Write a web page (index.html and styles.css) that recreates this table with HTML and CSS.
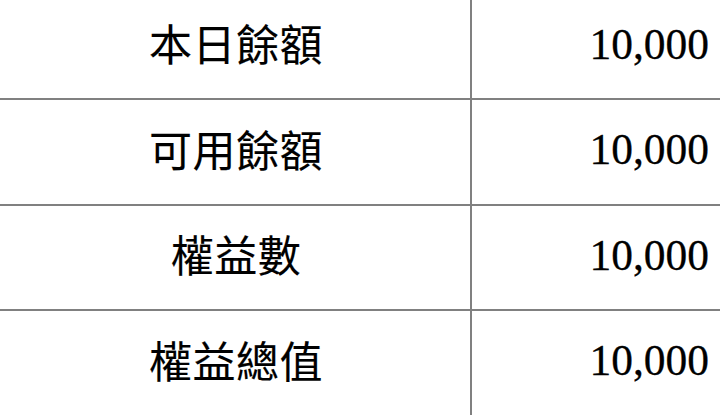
FILE: index.html
```html
<!DOCTYPE html>
<html lang="zh-Hant">
<head>
<meta charset="utf-8">
<link rel="stylesheet" href="styles.css">
</head>
<body>
<div class="sheet">
  <div class="row">
    <div class="label">本日餘額</div>
    <div class="value">10,000</div>
  </div>
  <div class="row">
    <div class="label">可用餘額</div>
    <div class="value">10,000</div>
  </div>
  <div class="row">
    <div class="label">權益數</div>
    <div class="value">10,000</div>
  </div>
  <div class="row">
    <div class="label">權益總值</div>
    <div class="value">10,000</div>
  </div>
</div>
</body>
</html>
```
FILE: styles.css
```css
html, body {
  margin: 0;
  padding: 0;
  background: #ffffff;
  overflow: hidden;
}
.sheet {
  margin-top: -5.5px;
  display: flex;
  flex-direction: column;
}
.row {
  display: grid;
  grid-template-columns: 472px 1fr;
  height: 105.5px;
  box-sizing: border-box;
  border-bottom: 2px solid #808080;
}
.label {
  display: flex;
  align-items: center;
  justify-content: center;
  border-right: 2px solid #808080;
  font-family: "Noto Sans CJK TC", "Noto Sans", sans-serif;
  font-size: 43px;
  line-height: 1;
  color: #000000;
  letter-spacing: 0.5px;
  padding: 0 0 7px 2px;
  -webkit-text-stroke: 0.15px #000000;
}
.value {
  display: flex;
  align-items: center;
  justify-content: flex-end;
  padding: 0 11px 3.5px 0;
  font-family: "Liberation Serif", "Times New Roman", serif;
  font-size: 43.5px;
  line-height: 1;
  color: #000000;
  -webkit-text-stroke: 0.3px #000000;
}
```
